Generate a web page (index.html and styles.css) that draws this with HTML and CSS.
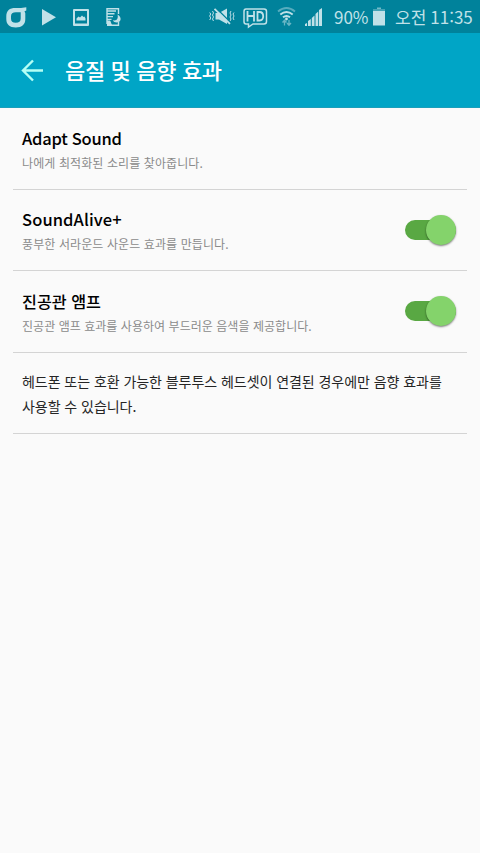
FILE: index.html
```html
<!DOCTYPE html>
<html lang="ko">
<head>
  <meta charset="UTF-8">
  <meta name="viewport" content="width=device-width, initial-scale=1">
  <title>음질 및 음향 효과</title>
  <link rel="stylesheet" href="styles.css">
</head>
<body>

  <div class="statusbar">
    <svg class="icons-left" width="130" height="33" viewBox="0 0 130 33">
      <path d="M26.300 7.300v3.200l-1.800.7.800 2V19c0 5.500-3.300 8.500-9.500 8.500S6.300 24.500 6.300 19v-2.500C6.300 10.500 9.500 8 15.500 8h5.500zM16 12.300c-3.500 0-5 1.300-5 4v2.200c0 3 1.500 4.300 4.800 4.300s4.900-1.300 4.900-4.300v-6.200z" fill-rule="evenodd"/>
      <path d="M42 9v16.500L56 17.200z"/>
      <path d="M74 9h14q1 0 1 1v15q0 1-1 1H74q-1 0-1-1V10q0-1 1-1zM75 11v12.500h12V11z" fill-rule="evenodd"/>
      <path d="M76.500 20.500v-2l2-2 1.500 1 2-2 1.500 1.500 1-.5 1 2v2z"/>
      <g fill="none" stroke="#c0e1e8" stroke-width="1.400">
        <path d="M107 24V8.800h11.500V14M107 11h9M107 13.800h7.500M107 16.600h6M107 19.400h4.500M107 22.200h3.500"/>
        <path d="M118.500 22v3.300H107"/>
      </g>
      <path d="M107 25.500v-5h3l2 4.500z"/>
      <path d="M117.500 14.500c4.500 2.500 4 7.500-.5 8-2 .1-3.500-.7-4-2.200 4 .8 5.500-2 4.500-5.800z"/>
    </svg>

    <svg class="icons-right" width="122" height="33" viewBox="206 0 122 33">
      <!-- vibrate / mute -->
      <path d="M215.500 13h3.500l8-4.500V24l-8-4.500h-3.500z"/>
      <g fill="none" stroke="#c0e1e8">
        <path d="M212.500 11l1 2-1 2 1 2-1 2 1 2M209.700 12.500l1 1.500-1 2 1 2-1 2M231 11l-1 2 1 2-1 2 1 2-1 2M234 12.500l-1 1.500 1 2-1 2 1 2"/>
        <path d="M216.500 8.500l15 15" stroke="#00829b" stroke-width="1.600"/>
        <path d="M214.500 8.800l15.500 15" stroke-width="1.800"/>
      </g>
      <!-- HD -->
      <path d="M246 9h18q2.500 0 2.500 2.500v10q0 2.500-2.500 2.500h-11l-4.500 3v-3H246q-2 0-2-2.500v-10Q244 9 246 9z" fill="none" stroke="#c0e1e8" stroke-width="1.500"/>
      <path d="M247.500 11v10.500M254 11v10.500M247.500 16h6.500M257.500 12v8.500h2q3.700 0 3.700-4.200t-3.700-4.300z" fill="none" stroke="#c0e1e8" stroke-width="1.800"/>
      <!-- wifi -->
      <g fill="none" stroke="#c0e1e8" stroke-width="1.900">
        <path d="M278 11.500q8.500-7 17 0" opacity=".45"/>
        <path d="M280.300 14.500q6.200-5 12.400 0M283 17.300q3.500-2.800 7 0"/>
      </g>
      <circle cx="286.500" cy="19" r="1.400"/>
      <path d="M284.500 25.500v-5M282.500 22.500l2-2.300 2 2.300M289 20v5M287 23l2 2.300 2-2.300" fill="none" stroke="#c0e1e8" stroke-width="1.300" opacity=".55"/>
      <!-- signal -->
      <path d="M305 24l2-1v3h-2zM308 21l2.800-2v7H308zM311.800 18l2.700-2.500V26h-2.700zM315.500 14l2.700-2.500V26h-2.700zM319 10l3-2v18h-3z"/>
    </svg>

    <span class="percent">90%</span>
    <svg class="battery" width="12" height="33" viewBox="0 0 12 33">
      <path d="M4 7.500h4V9H4z" opacity=".6"/>
      <path d="M0 9h12v2H0z" opacity=".35"/>
      <path d="M0 11h12v14.500H0z"/>
    </svg>
    <span class="clock"><span>오전</span><span>11:35</span></span>
  </div>

  <header class="header">
    <svg class="back" width="24" height="24" viewBox="0 0 24 24">
      <path d="M23 12.500H3M13 2.500L3 12.500l10 10" fill="none" stroke="#b4fff5" stroke-width="2.400"/>
    </svg>
    <h1>음질 및 음향 효과</h1>
  </header>

  <main class="list">
    <section class="item">
      <div class="text">
        <h2 class="adapt">Adapt Sound</h2>
        <p>나에게 최적화된 소리를 찾아줍니다.</p>
      </div>
    </section>
    <section class="item">
      <div class="text">
        <h2 class="alive">SoundAlive+</h2>
        <p>풍부한 서라운드 사운드 효과를 만듭니다.</p>
      </div>
      <div class="switch"></div>
    </section>
    <section class="item">
      <div class="text">
        <h2>진공관 앰프</h2>
        <p class="long">진공관 앰프 효과를 사용하여 부드러운 음색을 제공합니다.</p>
      </div>
      <div class="switch"></div>
    </section>
    <section class="item note">
      헤드폰 또는 호환 가능한 블루투스 헤드셋이 연결된 경우에만 음향 효과를<br>사용할 수 있습니다.
    </section>
  </main>

</body>
</html>
```

FILE: styles.css
```css
* {
  box-sizing: border-box;
}
body {
  margin: 0;
  min-height: 853px;
  background: #fafafa;
  color: #000;
  font-family: "Noto Sans CJK KR", sans-serif;
}
h1, h2, p {
  margin: 0;
}
svg {
  display: block;
  flex: none;
}
.statusbar {
  display: flex;
  height: 33px;
  background: #00829b;
  color: #c0e1e8;
  fill: #c0e1e8;
  line-height: 33px;
  white-space: nowrap;
}
.icons-right {
  margin-left: 76px;
}
.percent {
  width: 39px;
  margin-left: 6px;
  font-size: 17px;
}
.clock {
  display: flex;
  gap: 4px;
  margin-left: 10px;
  font-size: 17px;
}
.header {
  display: flex;
  align-items: center;
  height: 75px;
  padding-left: 20px;
  background: #00a5c6;
  border-bottom: 1px solid #1b9fba;
  color: #fff;
}
.header h1 {
  margin-left: 21px;
  padding-bottom: 2px;
  font-size: 22px;
  font-weight: 500;
  letter-spacing: -0.35px;
  line-height: 30px;
}
.list {
  padding: 0 13px;
}
.item {
  display: flex;
  align-items: center;
  justify-content: space-between;
  height: 81.500px;
  padding: 0 11px 0 9px;
  border-bottom: 1px solid #d4d4d4;
  white-space: nowrap;
}
.text {
  padding-top: 4px;
}
.item h2 {
  font-size: 16.200px;
  font-weight: 500;
  line-height: 25px;
}
.item .adapt {
  font-size: 16.500px;
  letter-spacing: -0.25px;
}
.item .alive {
  font-size: 16.500px;
  letter-spacing: 0.1px;
}
.item p {
  color: #8a8a8a;
  font-size: 12px;
  letter-spacing: 0.1px;
  line-height: 24px;
}
.item .long {
  letter-spacing: 0.04px;
}
.switch {
  width: 51px;
  height: 20px;
  border-radius: 10px;
  background: #59a843;
}
.switch::after {
  content: "";
  display: block;
  width: 30px;
  height: 30px;
  margin: -5px 0 0 auto;
  border-radius: 50%;
  background: #84d36b;
  box-shadow: 0 1px 2px rgba(0, 0, 0, 0.5);
}
.note {
  padding-top: 2px;
  color: #252525;
  font-size: 14px;
  letter-spacing: -0.05px;
  line-height: 25px;
}
```
